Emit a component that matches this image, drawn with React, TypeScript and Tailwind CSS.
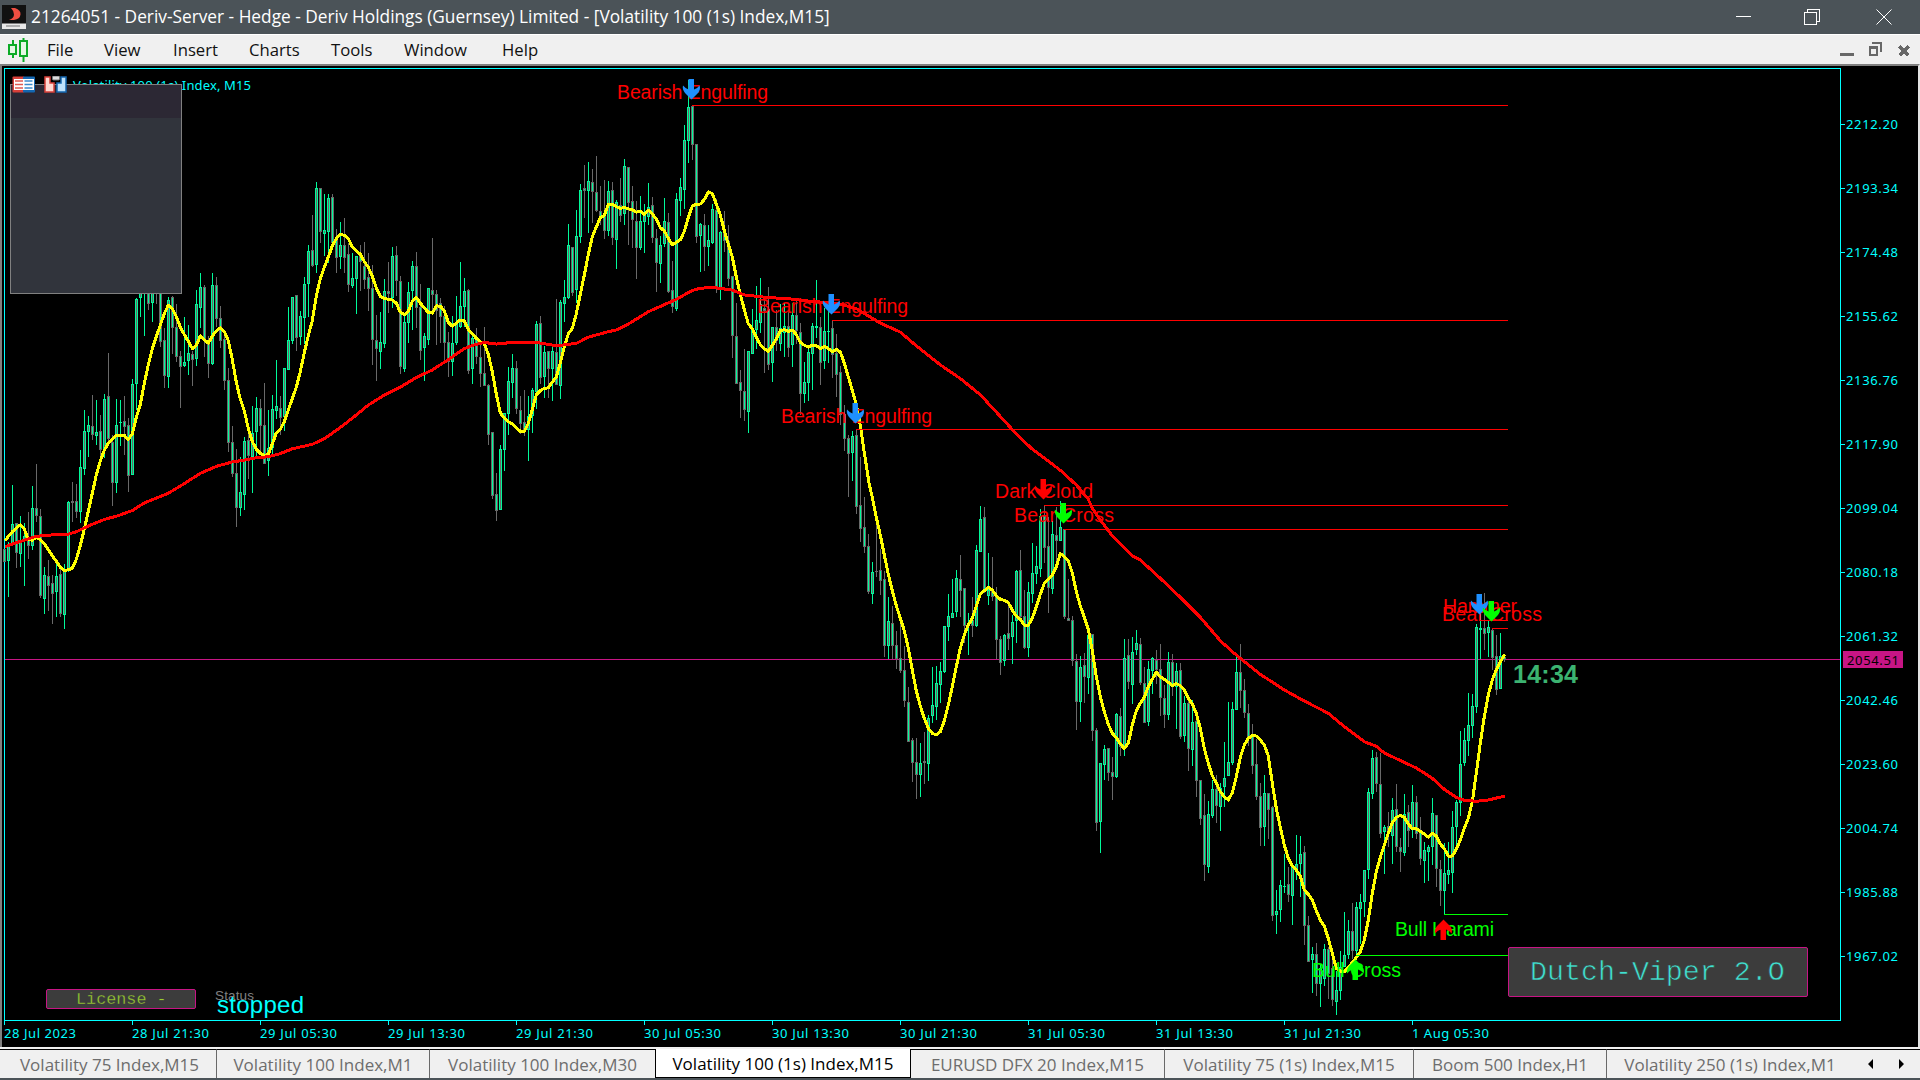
import { Fragment } from "react";

type Segment = {
  x: number;
  top: number;
  unit: number;
  data: string;
};

const BAR_STEP = 4;
const UP = "#00fa9a";
const DOWN = "#696969";

// direction, high, body top, body bottom, low. Every segment has its own vertical scale
const barSegments: Segment[] = [
  {
    x: 4,
    top: 60,
    unit: 0.34439,
    data: `d1420 1422 1455 1455,u1400 1412 1453 1558,u1234 1348 1405 1410,d1345 1347 1431 1475,u1324 1395 1433 1472,u1345 1383 1392 1527,d1312 1386 1410 1449,u1237 1301 1410 1422,d1173 1301 1323 1342,d1304 1325 1555 1562,
u1472 1497 1564 1609,d1452 1499 1526 1599,d1495 1520 1549 1637,u1461 1499 1543 1616,d1465 1493 1608 1616,u1463 1485 1611 1651,u1281 1284 1480 1486,d1225 1283 1284 1342,d1231 1282 1311 1330,u1131 1183 1311 1343,
u1016 1078 1187 1204,u1034 1061 1078 1153,d972 1064 1087 1103,u987 1081 1090 1118,d1031 1078 1131 1160,u970 985 1130 1156,d851 977 1100 1110,d1090 1112 1227 1294,u984 1061 1227 1257,u987 1052 1054 1120,
d975 1049 1064 1147,d1040 1061 1207 1253,u926 941 1203 1205,u690 695 940 1016,u660 670 690 746,u640 650 670 801,d640 660 708 726,u640 660 705 761,d650 655 670 709,d660 665 818 832,
d778 814 916 951,u688 697 919 951,d685 691 776 854,d709 776 860 877,d845 860 889 1010,u746 877 888 890,u769 851 872 914,d845 854 870 947,u668 711 867 888,u618 660 718 778,
d653 662 812 861,d800 815 882 922,u618 656 882 885,d630 654 751 775,d714 752 814 835,d790 811 930 958,d894 930 1110 1137,d1063 1110 1200 1211,d1130 1200 1300 1356,u1153 1255 1300 1324,
u1095 1107 1262 1306,d1075 1104 1147 1216,u1005 1084 1152 1257,u979 1011 1079 1160,d985 1011 1061 1147,d938 1061 1171 1173,u1016 1128 1163 1207,u973 1014 1126 1145,u871 1006 1018 1042,d976 1011 1039 1088,
u895 896 1036 1076,u717 814 899 900,u688 691 814 825,d683 684 806 846,u729 744 803 829,u630 651 747 825,u538 556 648 746,d450 553 597 600,u354 373 594 618,d373 374 498 531,
u389 495 503 569,u389 402 498 590,d389 399 530 548,d491 515 574 618,u470 538 570 606,d459 538 574 618,d530 564 651 674,u560 634 655 662,u569 570 634 738,d538 570 585 671,
d528 600 637 665,d560 632 664 728,d595 663 812 886,d740 814 837 932,u732 820 847 897,u636 672 823 836,d587 672 678 735,u543 570 690 719,d540 567 641 685`,
  },
  {
    x: 400,
    top: 60,
    unit: 0.34439,
    data: `d627 643 889 911,u735 762 896 906,u646 675 763 822,u584 599 669 784,d558 599 718 778,d650 718 844 870,u793 802 834 932,u662 664 812 827,d517 669 681 740,d667 680 728 828,
d691 708 745 822,d715 746 820 873,d790 820 876 920,u743 823 876 918,u685 768 821 827,u587 717 773 777,u633 672 716 775,d665 669 902 912,u802 808 896 941,d778 812 860 883,
d820 863 910 949,d775 909 945 948,d940 945 1088 1117,d1081 1082 1264 1274,d1199 1261 1308 1339,u1118 1131 1305 1307,u1025 1026 1131 1192,u891 933 1026 1088,u854 895 937 981,d874 895 1012 1027,
d976 1017 1055 1086,d957 1052 1078 1092,u976 1035 1074 1164,u951 959 1033 1082,u758 768 963 1012,d743 766 921 941,u830 850 919 981,d845 847 895 980,u830 847 895 990,d694 850 942 945,
u698 704 945 984,u639 689 707 761,u476 538 689 694,d542 544 675 684,u436 512 667 706,u360 378 513 531,d305 373 379 459,u296 352 378 501,d317 355 381 472,d279 384 436 440,
d366 439 461 480,d348 455 496 520,u350 381 495 511,d354 378 516 537,u407 413 521 607,d343 422 451 470,u287 310 445 478,d311 312 413 537,d366 410 463 546,d409 468 545 636,
u395 469 544 551,u418 450 468 560,u357 428 454 480,d398 422 516 530,d490 518 588 674,u511 538 590 648,u401 468 532 543,d445 471 672 676,d584 669 715 734,u386 405 721 730,
u343 370 407 453,u189 234 376 433,u58 137 233 299,d133 136 245 290,d244 245 513 531,u473 477 510 616,d447 480 541 613,u479 524 541 598,u418 434 530 533,d404 437 662 676,
u497 500 660 697,d438 500 524 558,d479 527 635 655,d628 629 800 864,d706 802 940 941,d900 936 960 1040,d839 962 1015 1048,u845 846 1020 1082,u724 782 852 854,u656 756 782 840,
u633 710 763 793,d690 722 726 908,d659 725 885 900,u775 777 878 935,d725 776 815 845,u709 780 822 845,u706 773 790 861,d726 773 834 862,u706 741 826 890,d691 741 786 826,
d764 791 969 1030,u877 936 969 996,u835 850 936 990,u764 773 852 958,u639 773 776 808,d745 776 879 944,u720 789 873 896,u728 787 788 880,d757 780 856 923,d795 852 913 979,
d888 907 1030 1060,d1003 1030 1100 1135,d1089 1100 1143 1269,u1077 1093 1140 1222,d1072 1090 1297 1318`,
  },
  {
    x: 860,
    top: 480,
    unit: 1 / 3,
    data: `d-69 76 146 186,d50 142 198 218,d163 199 335 341,u246 277 341 372,d127 274 275 291,d207 271 301 345,d274 297 496 531,u351 424 496 537,d378 430 497 537,d452 496 536 567,
d428 535 571 578,d498 571 661 681,d621 667 785 787,d773 781 848 907,d774 847 884 957,u789 850 884 951,d756 845 847 911,u705 715 851 903,u561 676 706 729,u558 610 680 719,
u546 574 613 669,u437 439 575 579,u342 409 440 483,u297 401 413 414,u270 295 395 410,d225 298 331 410,d324 325 436 488,u399 430 436 525,d351 420 437 471,u195 211 437 441,
u78 118 214 216,d81 112 334 339,u219 330 347 375,d231 330 349 364,d321 348 479 537,d468 478 548 585,u462 466 542 558,d370 461 475 510,u405 427 469 552,u270 274 422 489,
d210 271 408 415,d330 408 503 507,u306 337 503 531,u189 280 341 369,u198 259 280 311`,
  },
  {
    x: 1040,
    top: 440,
    unit: 1 / 3,
    data: `u207 228 385 411,d196 228 322 368,d230 319 443 519,u243 283 445 461,d202 286 301 390,u183 262 301 303,d268 269 529 537,d417 535 541 543,d528 541 661 678,d642 663 785 870,
u648 682 785 846,d639 676 710 789,u575 586 713 762,d582 584 871 903,d864 871 1147 1173,u969 970 1144 1239,u915 928 973 1020,d924 925 997 1023,d951 997 1009 1080,u819 822 1009 1014,
d804 828 920 948,u597 655 915 948,d597 646 724 747,u591 636 734 792,u570 610 628 645,d594 612 728 735,d681 730 847 850,u663 688 845 858,u651 655 691 762,d630 660 689 732,
d612 688 773 828,d735 774 823 864,u636 666 823 840,d642 667 735 768,u669 694 739 867,d669 690 889 896,u768 790 886 906,d780 790 926 993,u780 847 929 978,d815 843 1021 1071,
d1020 1021 1135 1155,d1062 1127 1273 1322,u1083 1123 1279 1299,u1020 1048 1127 1133,d1005 1048 1096 1149,u1029 1045 1099 1173,u906 1015 1039 1101,u786 967 1006 1007,u786 808 967 975,u651 697 808 810,
d612 697 751 804,d717 751 817 834,d792 820 889 918,d852 889 976 1002,d897 972 1069 1080,d1029 1069 1162 1218,u1005 1060 1159 1218,d1059 1060 1108 1197`,
  },
  {
    x: 1272,
    top: 580,
    unit: 1 / 3,
    data: `d678 682 1005 1023,u930 994 1003 1062,u900 915 989 1026,u822 918 919 939,d861 913 943 966,u858 862 946 1035,u765 853 864 900,u768 823 849 951,d798 817 1036 1095,d1008 1036 1144 1146,
u1101 1123 1138 1239,d1089 1123 1210 1248,u1155 1165 1210 1281,u1092 1108 1195 1218,d1101 1108 1180 1257,d1117 1165 1258 1278,u1173 1231 1265 1305,u1113 1162 1231 1260,u996 1126 1159 1162,u1020 1054 1123 1138,
d969 1054 1110 1138,u966 982 1111 1130,u942 967 986 1092,u870 871 964 1011,u624 637 869 897,u510 535 640 657,d516 532 610 636,d519 613 761 774,u735 742 754 882,d696 740 756 800,
u654 691 766 852,d612 688 799 816,d774 802 815 876,u642 703 817 828,d675 697 751 801,u615 667 742 774,d648 667 761 777,d711 757 835 855,u786 810 841 909,u795 802 814 903,
u654 700 799 855,d705 706 865 921,d840 868 931 978,u789 880 931 1003,u786 871 883 912,u693 742 877 939,u660 667 739 800,u453 553 667 708,u444 481 547 558,u339 436 481 528,
u342 379 436 474,u132 142 379 399,u96 146 148 237,d39 146 160 210,u120 142 157 231,d147 151 233 270,d165 229 328 345,u159 229 325 327,d228 233 237 246`,
  },
];

const fastAverage: Segment[] = [
  {
    x: 0,
    top: 60,
    unit: 0.34439,
    data: "15,1395 25,1384 37,1370 49,1359 61,1350 73,1362 85,1393 97,1394 109,1386 121,1393 133,1405 145,1422 157,1440 169,1455 181,1473 193,1483 205,1480 217,1476 229,1450 241,1410 253,1362 265,1310 277,1258 289,1205 301,1165 313,1133 325,1113 337,1101 349,1090 361,1089 373,1090 385,1102 397,1085 409,1038 421,1000 433,940 445,885 457,838 469,803 481,770 493,736 505,712 517,722 529,745 541,776 553,797 565,817 577,838 589,828 601,801 613,812 625,822 637,802 649,787 661,778 673,788 685,815 697,870 709,935 721,985 733,1018 745,1070 757,1108 769,1130 781,1142 793,1148 805,1145 817,1115 829,1083 841,1073 853,1050 865,1017 877,983 889,950 901,905 913,850 925,800 937,757 949,685 961,635 973,602 985,572 997,540 1009,519 1021,506 1033,509 1045,518 1057,543 1069,554 1081,564 1093,585 1105,602 1117,628 1129,662 1141,687 1153,692 1165,695 1177,697 1189,706",
  },
  {
    x: 400,
    top: 60,
    unit: 0.34439,
    data: "1,732 13,740 25,730 37,700 49,690 61,706 73,720 85,733 97,735 109,714 121,715 133,728 145,762 157,773 169,764 181,755 193,757 205,782 217,795 229,808 241,818 253,823 265,855 277,905 289,970 301,1025 313,1040 325,1050 337,1057 349,1068 361,1078 373,1078 385,1055 397,1015 409,972 421,960 433,953 445,952 457,935 469,920 481,880 493,833 505,795 517,780 529,737 541,680 553,625 565,565 577,513 589,485 601,458 613,451 625,419 637,419 649,426 661,431 673,428 685,432 697,435 709,442 721,439 733,448 745,436 757,447 769,462 781,487 793,496 805,518 817,537 829,529 841,522 853,498 865,457 877,424 889,419 901,418 913,405 925,383 937,388 949,418 961,450 973,495 985,535 997,572 1009,630 1021,680 1033,725 1045,766 1057,780 1069,805 1081,826 1093,838 1105,846 1117,828 1129,810 1141,786 1153,783 1165,788 1177,784 1189,797",
  },
  {
    x: 700,
    top: 60,
    unit: 0.34439,
    data: "301,820 313,828 325,834 337,828 349,829 361,838 373,832 385,838 397,847 409,840 421,848 433,880 445,920 457,960 469,1000 481,1060 493,1140 505,1215",
  },
  {
    x: 860,
    top: 480,
    unit: 1 / 3,
    data: "25,0 37,52 49,112 61,165 73,225 85,283 97,332 109,377 121,415 133,452 145,505 157,570 169,633 181,678 193,715 205,745 217,760 229,765 241,755 253,722 265,675 277,620 289,560 301,505 313,465 325,435 337,415 349,378 361,342 373,332 385,322 397,330 409,347 421,358 433,361 445,368 457,390 469,408 481,418 493,435 505,436 517,415",
  },
  {
    x: 980,
    top: 440,
    unit: 1 / 3,
    data: "169,500 181,463 193,430 205,418 217,405 229,380 241,341 253,350 265,363 277,398 289,455 301,497 313,532 325,568 337,632 349,710 361,770 373,815 385,853 397,880 409,893 421,912 433,925 445,910 457,855 469,812 481,790 493,772 505,740 517,718 529,697 541,710 553,718 565,727 577,737 589,731 601,737 613,750 625,775 637,792 649,820 661,865 673,925 685,970 697,1007 709,1030 721,1055 733,1070 745,1080 757,1058 769,1010 781,952 793,915 805,895 817,886 829,888 841,900 853,915 865,948",
  },
  {
    x: 1240,
    top: 580,
    unit: 1 / 3,
    data: "97,610 109,685 121,742 133,795 145,835 157,857 169,870 181,888 193,930 205,943 217,960 229,992 241,1020 253,1038 265,1075 277,1120 289,1165 301,1173 313,1176 325,1162 337,1148 349,1132 361,1115 373,1080 385,1020 397,940 409,875 421,832 433,795 445,760 457,728 469,712 481,706 493,712 505,732 517,746 529,746 541,754 553,762 565,771 577,760 589,768 601,792 613,806 625,828 637,828 649,808 661,780 673,745 685,715 697,665 709,580 721,490 733,410 745,345 757,300 769,270 781,245 795,223",
  },
];

const slowAverage: Segment[] = [
  {
    x: 0,
    top: 60,
    unit: 0.34439,
    data: "15,1413 49,1402 109,1383 157,1379 205,1377 229,1370 265,1353 313,1334 349,1325 397,1308 433,1286 505,1258 553,1230 601,1200 649,1180 697,1167 733,1162 769,1155 805,1152 841,1143 877,1129 937,1116 973,1100 1021,1067 1057,1040 1105,1002 1153,973",
  },
  {
    x: 400,
    top: 60,
    unit: 0.34439,
    data: "1,950 49,922 97,900 145,870 193,838 217,829 253,820 289,825 337,820 409,820 469,830 529,823 565,805 625,789 649,784 685,767 745,731 829,695 877,669 901,663 937,660 997,668 1033,682 1105,690 1165,693",
  },
  {
    x: 700,
    top: 60,
    unit: 0.34439,
    data: "313,699 397,706 433,712 469,722 517,750 541,764 601,790 649,830 721,885 781,925 841,972 937,1073 993,1127 1045,1165",
  },
  {
    x: 980,
    top: 440,
    unit: 1 / 3,
    data: "245,94 289,135 325,178 337,205 361,240 397,288 457,347 481,360 541,415 601,472 661,532 721,602 757,635",
  },
  {
    x: 1240,
    top: 580,
    unit: 1 / 3,
    data: "1,235 61,283 133,330 193,363 265,400 313,440 373,485 409,499 433,519 529,564 577,595 613,628 649,652 673,661 709,664 745,660 795,648",
  },
];

const bars = barSegments.flatMap(({ x, top, unit, data }) =>
  data.split(",").map((item, i) => {
    const bar = item.trim();
    const [high, open, close, low] = bar
      .slice(1)
      .split(" ")
      .map((v) => top + Number(v) * unit);
    return { x: x + i * BAR_STEP, up: bar[0] === "u", high, open, close, low };
  })
);

function toPoints(segments: Segment[]) {
  return segments
    .flatMap(({ x, top, unit, data }) =>
      data.split(" ").map((pair) => {
        const [px, py] = pair.split(",").map(Number);
        return `${(x + px / 3).toFixed(1)},${(top + py * unit).toFixed(1)}`;
      })
    )
    .join(" ");
}

const prices = ["2212.20", "2193.34", "2174.48", "2155.62", "2136.76", "2117.90", "2099.04", "2080.18", "2061.32", "2042.46", "2023.60", "2004.74", "1985.88", "1967.02"];

const times = ["28 Jul 2023", "28 Jul 21:30", "29 Jul 05:30", "29 Jul 13:30", "29 Jul 21:30", "30 Jul 05:30", "30 Jul 13:30", "30 Jul 21:30", "31 Jul 05:30", "31 Jul 13:30", "31 Jul 21:30", "1 Aug 05:30"];

const levels = [
  { x: 692, y: 105, color: "#ff0000" },
  { x: 832, y: 320, color: "#ff0000" },
  { x: 856, y: 429, color: "#ff0000" },
  { x: 1044, y: 505, color: "#ff0000" },
  { x: 1064, y: 529, color: "#ff0000" },
  { x: 1480, y: 620, color: "#ff0000" },
  { x: 1492, y: 628, color: "#ff0000" },
  { x: 1444, y: 914, color: "#00ff00" },
  { x: 1356, y: 955, color: "#00ff00" },
];

const patterns = [
  { text: "Bearish Engulfing", x: 617, y: 98.5, width: 151, color: "#ff0000" },
  { text: "Bearish Engulfing", x: 757, y: 313, width: 151, color: "#ff0000" },
  { text: "Bearish Engulfing", x: 781, y: 422.5, width: 151, color: "#ff0000" },
  { text: "Dark Cloud", x: 995, y: 498, width: 98, color: "#ff0000" },
  { text: "Bear Cross", x: 1014, y: 522, width: 100, color: "#ff0000" },
  { text: "Hammer", x: 1443, y: 613, width: 74, color: "#ff0000" },
  { text: "Bear Cross", x: 1442, y: 621, width: 100, color: "#ff0000" },
  { text: "Bull Harami", x: 1395, y: 936, width: 99, color: "#00ff00" },
  { text: "Bull Cross", x: 1312, y: 977, width: 89, color: "#00ff00" },
];

const arrows = [
  { x: 692, y: 79, color: "#1e90ff" },
  { x: 832, y: 294, color: "#1e90ff" },
  { x: 856, y: 403, color: "#1e90ff" },
  { x: 1044, y: 479, color: "#ff0000" },
  { x: 1064, y: 503, color: "#00ff00" },
  { x: 1480, y: 594, color: "#1e90ff" },
  { x: 1492, y: 601, color: "#00ff00" },
  { x: 1444, y: 940, color: "#ff0000", flip: true },
  { x: 1356, y: 980, color: "#00ff00", flip: true },
];

const menu = [
  { label: "File", box: "w-[57px]" },
  { label: "View", box: "w-[69px]" },
  { label: "Insert", box: "w-[76px]" },
  { label: "Charts", box: "w-[82px]" },
  { label: "Tools", box: "w-[73px]" },
  { label: "Window", box: "w-[98px]" },
  { label: "Help", box: "w-[60px]" },
];

const tabs = [
  { label: "Volatility 75 Index,M15", box: "w-[217px] border-r border-r-[#696969] pl-[3px]" },
  { label: "Volatility 100 Index,M1", box: "w-[213px] border-r border-r-[#696969]" },
  { label: "Volatility 100 Index,M30", box: "w-[225px]" },
  { label: "Volatility 100 (1s) Index,M15", box: "w-[256px]", active: true },
  { label: "EURUSD DFX 20 Index,M15", box: "w-[254px] border-r border-r-[#696969]" },
  { label: "Volatility 75 (1s) Index,M15", box: "w-[249px] border-r border-r-[#696969]" },
  { label: "Boom 500 Index,H1", box: "w-[193px] border-r border-r-[#696969]" },
  { label: "Volatility 250 (1s) Index,M1", box: "w-[246px]" },
];

function TitleBar() {
  return (
    <div className="flex h-[34px] items-center bg-[#4b5358] pl-[2px] text-white">
      <svg width="24" height="24" viewBox="0 0 24 24">
        <rect width="24" height="24" fill="#111" />
        <path d="M9 3h4q6 2 5.500 6.500T12 15H7q5-2 5-5.500T9 3z" fill="#f04e42" />
        <rect y="18.500" width="24" height="5.500" fill="#e8e8e8" />
        <path d="M4 21h14" stroke="#9a9a9a" strokeWidth="1.500" />
      </svg>
      <span className="ml-[5px] whitespace-nowrap text-[17.300px] leading-[34px]">
        21264051 - Deriv-Server - Hedge - Deriv Holdings (Guernsey) Limited - [Volatility 100 (1s) Index,M15]
      </span>
      <div className="ml-auto flex items-center pr-[27px]">
        <svg width="16" height="16" shapeRendering="crispEdges" fill="none" stroke="#fff">
          <path d="M0 7.500h15" />
        </svg>
        <svg width="17" height="16" className="ml-[52px]" shapeRendering="crispEdges" fill="none" stroke="#fff">
          <path d="M.5 3.500h12v12H.5zM3.500 3V.5h12v12h-3" />
        </svg>
        <svg width="17" height="16" className="ml-[55px]" fill="none" stroke="#fff">
          <path d="M.5.5l15 15M15.500.5l-15 15" />
        </svg>
      </div>
    </div>
  );
}

function MenuBar() {
  return (
    <div className="flex h-[30px] items-center border-t border-white bg-[#f0f0f0] pl-[8px] text-[#111]">
      <svg width="21" height="24" viewBox="0 0 21 24" fill="none" stroke="#0cab26" strokeWidth="2">
        <path d="M5 2v5M5 16v4M15.500 0v3M15.500 18v6" />
        <path d="M1 7h7v9H1zM12 3h7v15h-7z" fill="#e4f8e4" />
      </svg>
      <div className="ml-[18px] flex text-[16.700px]">
        {menu.map(({ label, box }) => (
          <span key={label} className={box}>
            {label}
          </span>
        ))}
      </div>
      <svg width="72" height="20" className="ml-auto mr-[8px]" shapeRendering="crispEdges" fill="#686868">
        <path d="M0 13h14v3H0zM29 6h9v10h-9zM32 2h10v10h-2V4h-8z" />
        <path d="M31 9h5v5h-5z" fill="#f0f0f0" />
        <path d="M59.500 6.500l9 9M68.500 6.500l-9 9" stroke="#686868" strokeWidth="3" />
      </svg>
    </div>
  );
}

function Candles() {
  return (
    <g>
      {bars.map((bar) => {
        const top = Math.floor(bar.open);
        const height = Math.floor(bar.close) - top + 1;
        const high = Math.round(bar.high);
        return (
          <Fragment key={bar.x}>
            <rect x={bar.x} y={high} width={1} height={Math.max(1, Math.round(bar.low) - high)} fill={bar.up ? UP : DOWN} />
            <rect x={bar.x - 1} y={top} width={3} height={height} fill={bar.up ? UP : DOWN} />
            {height > 2 && <rect x={bar.x} y={top + 1} width={1} height={height - 2} fill={bar.up ? DOWN : UP} />}
          </Fragment>
        );
      })}
    </g>
  );
}

function Chart() {
  return (
    <svg width="1916" height="981" viewBox="2 66 1916 981" className="block" shapeRendering="crispEdges">
      <g fill="#00ffff">
        <rect x="4" y="68" width="1" height="953" />
        <rect x="4" y="68" width="1837" height="1" />
        <rect x="1840" y="68" width="1" height="953" />
        <rect x="4" y="1020" width="1837" height="1" />
      </g>
      <g fill="#00ffff" className="font-['Noto_Sans',sans-serif] text-[13px]">
        <text x="73" y="89.500" textLength="178">
          Volatility 100 (1s) Index, M15
        </text>
        {prices.map((price, i) => (
          <g key={price}>
            <rect x="1841" y={124 + i * 64} width="4" height="1" />
            <text x="1846" y={129 + i * 64} textLength="52">
              {price}
            </text>
          </g>
        ))}
        {times.map((time, i) => (
          <g key={time}>
            <rect x={4 + i * 128} y="1021" width="1" height="4" />
            <text x={4 + i * 128} y="1037.500" textLength={i === 0 ? 72 : 77}>
              {time}
            </text>
          </g>
        ))}
      </g>
      <rect x="5" y="659" width="1835" height="1" fill="#c71585" />
      <Candles />
      <g fill="none" strokeWidth="3" strokeLinejoin="round">
        <polyline points={toPoints(fastAverage)} stroke="#ffff00" />
        <polyline points={toPoints(slowAverage)} stroke="#ff0000" />
      </g>
      {levels.map(({ x, y, color }) => (
        <rect key={y} x={x} y={y} width={1508 - x} height="1" fill={color} />
      ))}
      <g className="font-['Liberation_Sans',sans-serif] text-[19.500px]">
        {patterns.map(({ text, x, y, width, color }) => (
          <text key={y} x={x} y={y} textLength={width} fill={color}>
            {text}
          </text>
        ))}
      </g>
      {arrows.map(({ x, y, color, flip }) => (
        <path
          key={y}
          d="M-3 0H2.500V10.500Q6 9.500 8 6.500Q9.500 10 6.500 14L0 20.500L-6.500 14Q-9.500 10 -8.500 6.500Q-6 9.500 -3 10.500z"
          transform={`translate(${x - 0.5} ${y}) scale(1 ${flip ? -1 : 1})`}
          fill={color}
          shapeRendering="auto"
        />
      ))}
      <text x="1513" y="682.500" textLength="65" fill="#3cb371" className="font-['Liberation_Sans',sans-serif] text-[25px] font-bold">
        14:34
      </text>
      <rect x="1843" y="651" width="60" height="17" fill="#c71585" />
      <text x="1847" y="664.500" textLength="52" fill="#000" className="font-['Noto_Sans',sans-serif] text-[13px]">
        2054.51
      </text>
      <text x="215" y="1000" textLength="39" fill="#808080" className="font-['Liberation_Sans',sans-serif] text-[13.500px]">
        Status
      </text>
      <text x="217" y="1013" textLength="87" fill="#00ffff" className="font-['Liberation_Sans',sans-serif] text-[24px]">
        stopped
      </text>
    </svg>
  );
}

function ChartWindow() {
  return (
    <div className="relative h-[983px] border-l-2 border-r-2 border-t-2 border-l-[#808080] border-r-[#e3e3e3] border-t-[#808080] bg-black">
      <Chart />
      {/* expert panel floating over the plot */}
      <div className="absolute left-[8px] top-[18px] h-[210px] w-[172px] border border-[#808080] bg-[#31343c]">
        <div className="h-[33px] bg-[#2c2834]" />
      </div>
      <svg width="24" height="17" className="absolute left-[10px] top-[10px]">
        <rect x=".5" y=".5" width="12" height="16" rx="1" fill="#d8403a" />
        <rect x="11" y=".5" width="12" height="16" rx="1" fill="#1467b0" />
        <path d="M2 3h20v11H2z" fill="#fff" />
        <path d="M3 5h8M3 8.500h8M3 12h8" stroke="#e05a50" strokeWidth="1.500" />
        <path d="M12.500 5h8M12.500 8.500h8M12.500 12h8" stroke="#3b8acb" strokeWidth="1.500" />
      </svg>
      <svg width="24" height="17" className="absolute left-[42px] top-[10px]">
        <path d="M1 1h5v6h4v9H1z" fill="#ffd9d2" stroke="#d8403a" strokeWidth="1.500" />
        <path d="M22 1h-5v6h-4v9h9z" fill="#bfe2fb" stroke="#1467b0" strokeWidth="1.500" />
        <rect x="8.500" y="0" width="7" height="4" rx="1" fill="#ddd" stroke="#777" />
      </svg>
      <div className="absolute left-[44px] top-[923px] flex h-[20px] w-[150px] items-center rounded-[2px] border border-[#c71585] bg-[#3c3c3c] pl-[29px] pt-[2px] font-['Liberation_Mono',monospace] text-[16.800px] leading-none text-[#9acd32] [-webkit-text-stroke:0.3px_#3c3c3c]">
        License -
      </div>
      <div className="absolute left-[1506px] top-[881px] flex h-[50px] w-[300px] items-center rounded-[2px] border border-[#c71585] bg-[#3c3c3c] pl-[21px] font-['Liberation_Mono',monospace] text-[28.300px] leading-none text-[#40e0d0] [-webkit-text-stroke:0.6px_#3c3c3c]">
        Dutch-Viper 2.O
      </div>
    </div>
  );
}

function TabBar() {
  return (
    <div className="flex h-[31px] border-b-2 border-[#4b5358] bg-[#f0f0f0]">
      {tabs.map(({ label, box, active }) =>
        active ? (
          <div key={label} className={`${box} flex items-center justify-center whitespace-nowrap border-x border-b border-black bg-white pt-[2px] text-[17px] text-black`}>
            {label}
          </div>
        ) : (
          <div key={label} className={`${box} flex items-center justify-center whitespace-nowrap border-t border-t-black pt-[2px] text-[17px] text-[#6d6d6d]`}>
            {label}
          </div>
        )
      )}
      <div className="flex flex-1 items-center border-t border-black">
        <svg width="67" height="10" fill="#000">
          <path d="M20 0v10l-5-5zM46 0v10l5-5z" />
        </svg>
      </div>
    </div>
  );
}

export default function App() {
  return (
    <div className="flex h-[1080px] w-[1920px] flex-col overflow-hidden bg-[#f0f0f0] font-['Open_Sans',sans-serif]">
      <TitleBar />
      <MenuBar />
      <ChartWindow />
      <div className="h-[2px]" />
      <TabBar />
    </div>
  );
}
